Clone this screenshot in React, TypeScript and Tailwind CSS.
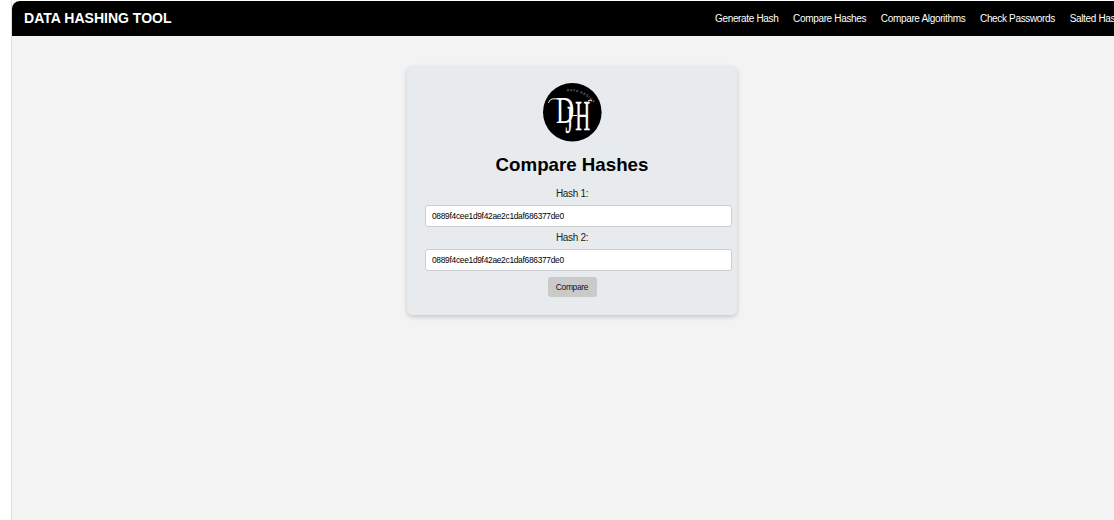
const NAV_ITEMS = [
  "Generate Hash",
  "Compare Hashes",
  "Compare Algorithms",
  "Check Passwords",
  "Salted Hashing",
];

function Logo() {
  return (
    <svg viewBox="0 0 59 59" className="mx-auto block size-[59px]" aria-hidden="true">
      <defs>
        <path id="arc" d="M24 8.4 Q42 7 53.5 24" />
      </defs>
      <circle cx="29.3" cy="29.3" r="29.3" fill="#000" />
      <g fill="#fff" fontFamily="'Liberation Serif', serif">
        <text transform="translate(13 40) scale(0.68 1)" fontSize="37">D</text>
        <text transform="translate(22.6 49.5) scale(0.45 1)" fontSize="41" stroke="#fff" strokeWidth="0.3">J</text>
        <text transform="translate(32.2 46.8) scale(0.48 1)" fontSize="43" stroke="#fff" strokeWidth="0.3">H</text>
        <text fontSize="3.2" letterSpacing="0.9" fill="#bbb" fontFamily="'Liberation Sans', sans-serif">
          <textPath href="#arc">DATA DESIGN</textPath>
        </text>
      </g>
      <path d="M5.5 19.8 Q7 15.5 11 15.8 L19 16.2 M28 32.5 H34 M45 18 Q47 16 49 18" fill="none" stroke="#fff" strokeWidth="1" />
    </svg>
  );
}

function HashField({ label, id }: { label: string; id: string }) {
  return (
    <div>
      <label htmlFor={id} className="block text-center text-[10px] leading-[11px] tracking-[-0.33px] text-[#222]">
        {label}
      </label>
      <input
        id={id}
        defaultValue="0889f4cee1d9f42ae2c1daf686377de0"
        className="mt-[6px] block h-[22px] w-[307px] rounded-[3px] border border-[#ccd0d3] bg-white px-[6px] text-[8.4px] tracking-[-0.29px] text-black outline-none"
      />
    </div>
  );
}

export default function App() {
  return (
    <div className="h-[520px] overflow-hidden bg-white pl-[11px] font-['Liberation_Sans',Arial,sans-serif]">
      <div className="h-full border-l border-[#dfe1e2] bg-white pt-px">
        <div className="h-full rounded-tl-[8px] bg-[#f3f3f3]">
          <header className="flex h-[35px] items-center overflow-hidden rounded-tl-[8px] bg-black pl-[12px] text-white">
            <div className="w-[691px] shrink-0 pt-px text-[14.04px] font-bold whitespace-nowrap">DATA HASHING TOOL</div>
            <nav className="flex shrink-0 gap-[14.7px] text-[10px] tracking-[-0.34px] whitespace-nowrap">
              {NAV_ITEMS.map((item) => (
                <a key={item} href="#">{item}</a>
              ))}
            </nav>
          </header>
          <main className="ml-[395px] mt-[30px] h-[249px] w-[330px] rounded-[6px] bg-[#e7ebee] pt-[17px] pl-[18px] shadow-[0_2px_5px_rgba(0,0,0,0.18)]">
            <div className="w-[294px]">
              <Logo />
              <h1 className="mt-[12px] text-center text-[18.72px] leading-[22px] font-bold text-black">Compare Hashes</h1>
              <div className="mt-[12px] flex flex-col gap-[5px]">
                <HashField label="Hash 1:" id="hash-1" />
                <HashField label="Hash 2:" id="hash-2" />
              </div>
              <button className="mx-auto mt-[6px] block h-[20px] w-[49px] rounded-[3px] bg-[#cacaca] text-[8.4px] tracking-[-0.29px] text-[#111]">
                Compare
              </button>
            </div>
          </main>
        </div>
      </div>
    </div>
  );
}
